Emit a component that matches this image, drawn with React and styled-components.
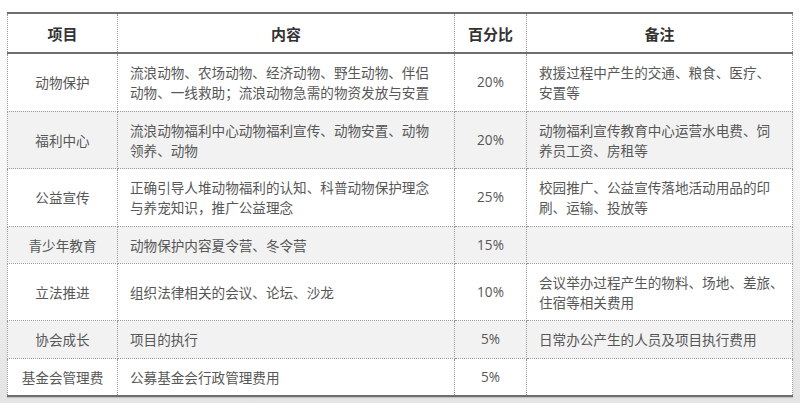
import styled, { createGlobalStyle } from "styled-components";

const GlobalStyle = createGlobalStyle`
  html, body {
    margin: 0;
    padding: 0;
  }
  body {
    font-family: "Noto Sans CJK SC", "Open Sans", sans-serif;
    text-spacing-trim: space-all;
  }
`;

const Page = styled.div`
  width: 800px;
  height: 403px;
  box-sizing: border-box;
  padding: 12px 8px 0 7px;
  background: linear-gradient(#ffffff 0%, #f6f6f6 45%, #e4e4e4 100%);
  overflow: hidden;
`;

const Table = styled.table`
  width: 785px;
  border-collapse: collapse;
  table-layout: fixed;
  background: #fff;
  border-top: 2px solid #6e6e6e;
  border-bottom: 2px solid #6e6e6e;
  box-shadow: 0 1px 1px rgba(0, 0, 0, 0.15);
`;

const Head = styled.th`
  height: 38px;
  padding: 0;
  font-size: 15px;
  font-weight: 700;
  color: #333;
  text-align: center;
  border-left: 1px dotted #9a9a9a;
  border-right: 1px dotted #9a9a9a;
  border-bottom: 2px solid #6e6e6e;
`;

const Row = styled.tr`
  background: ${(p) => (p.$shade ? "#f2f2f2" : "#ffffff")};
`;

const Cell = styled.td`
  padding: 8px ${(p) => (p.$tight ? "2px" : "12px")} 8px 12px;
  font-size: 13.6px;
  line-height: 20.25px;
  color: #575757;
  text-align: ${(p) => (p.$center ? "center" : "left")};
  vertical-align: middle;
  border: 1px dotted #9a9a9a;
  white-space: nowrap;
  font-family: ${(p) =>
    p.$num ? '"Open Sans", "Noto Sans CJK SC", sans-serif' : "inherit"};
`;

const Line = styled.span`
  display: block;
`;

const rows = [
  {
    name: "动物保护",
    content: ["流浪动物、农场动物、经济动物、野生动物、伴侣", "动物、一线救助；流浪动物急需的物资发放与安置"],
    pct: "20%",
    note: ["救援过程中产生的交通、粮食、医疗、", "安置等"],
  },
  {
    name: "福利中心",
    content: ["流浪动物福利中心动物福利宣传、动物安置、动物", "领养、动物"],
    pct: "20%",
    note: ["动物福利宣传教育中心运营水电费、饲", "养员工资、房租等"],
  },
  {
    name: "公益宣传",
    content: ["正确引导人堆动物福利的认知、科普动物保护理念", "与养宠知识，推广公益理念"],
    pct: "25%",
    note: ["校园推广、公益宣传落地活动用品的印", "刷、运输、投放等"],
  },
  { name: "青少年教育", content: ["动物保护内容夏令营、冬令营"], pct: "15%", note: [] },
  {
    name: "立法推进",
    content: ["组织法律相关的会议、论坛、沙龙"],
    pct: "10%",
    note: ["会议举办过程产生的物料、场地、差旅、", "住宿等相关费用"],
  },
  { name: "协会成长", content: ["项目的执行"], pct: "5%", note: ["日常办公产生的人员及项目执行费用"] },
  { name: "基金会管理费", content: ["公募基金会行政管理费用"], pct: "5%", note: [] },
];

const App = () => {
  return (
    <Page>
      <GlobalStyle />
      <Table>
        <colgroup>
          <col style={{ width: 110 }} />
          <col style={{ width: 337 }} />
          <col style={{ width: 72 }} />
          <col style={{ width: 266 }} />
        </colgroup>
        <thead>
          <tr>
            <Head>项目</Head>
            <Head>内容</Head>
            <Head>百分比</Head>
            <Head>备注</Head>
          </tr>
        </thead>
        <tbody>
          {rows.map((r, i) => (
            <Row key={r.name} $shade={i % 2 === 1}>
              <Cell $center>{r.name}</Cell>
              <Cell>
                {r.content.map((t) => (
                  <Line key={t}>{t}</Line>
                ))}
              </Cell>
              <Cell $center $num>
                {r.pct}
              </Cell>
              <Cell $tight>
                {r.note.map((t) => (
                  <Line key={t}>{t}</Line>
                ))}
              </Cell>
            </Row>
          ))}
        </tbody>
      </Table>
    </Page>
  );
};

export default App;
